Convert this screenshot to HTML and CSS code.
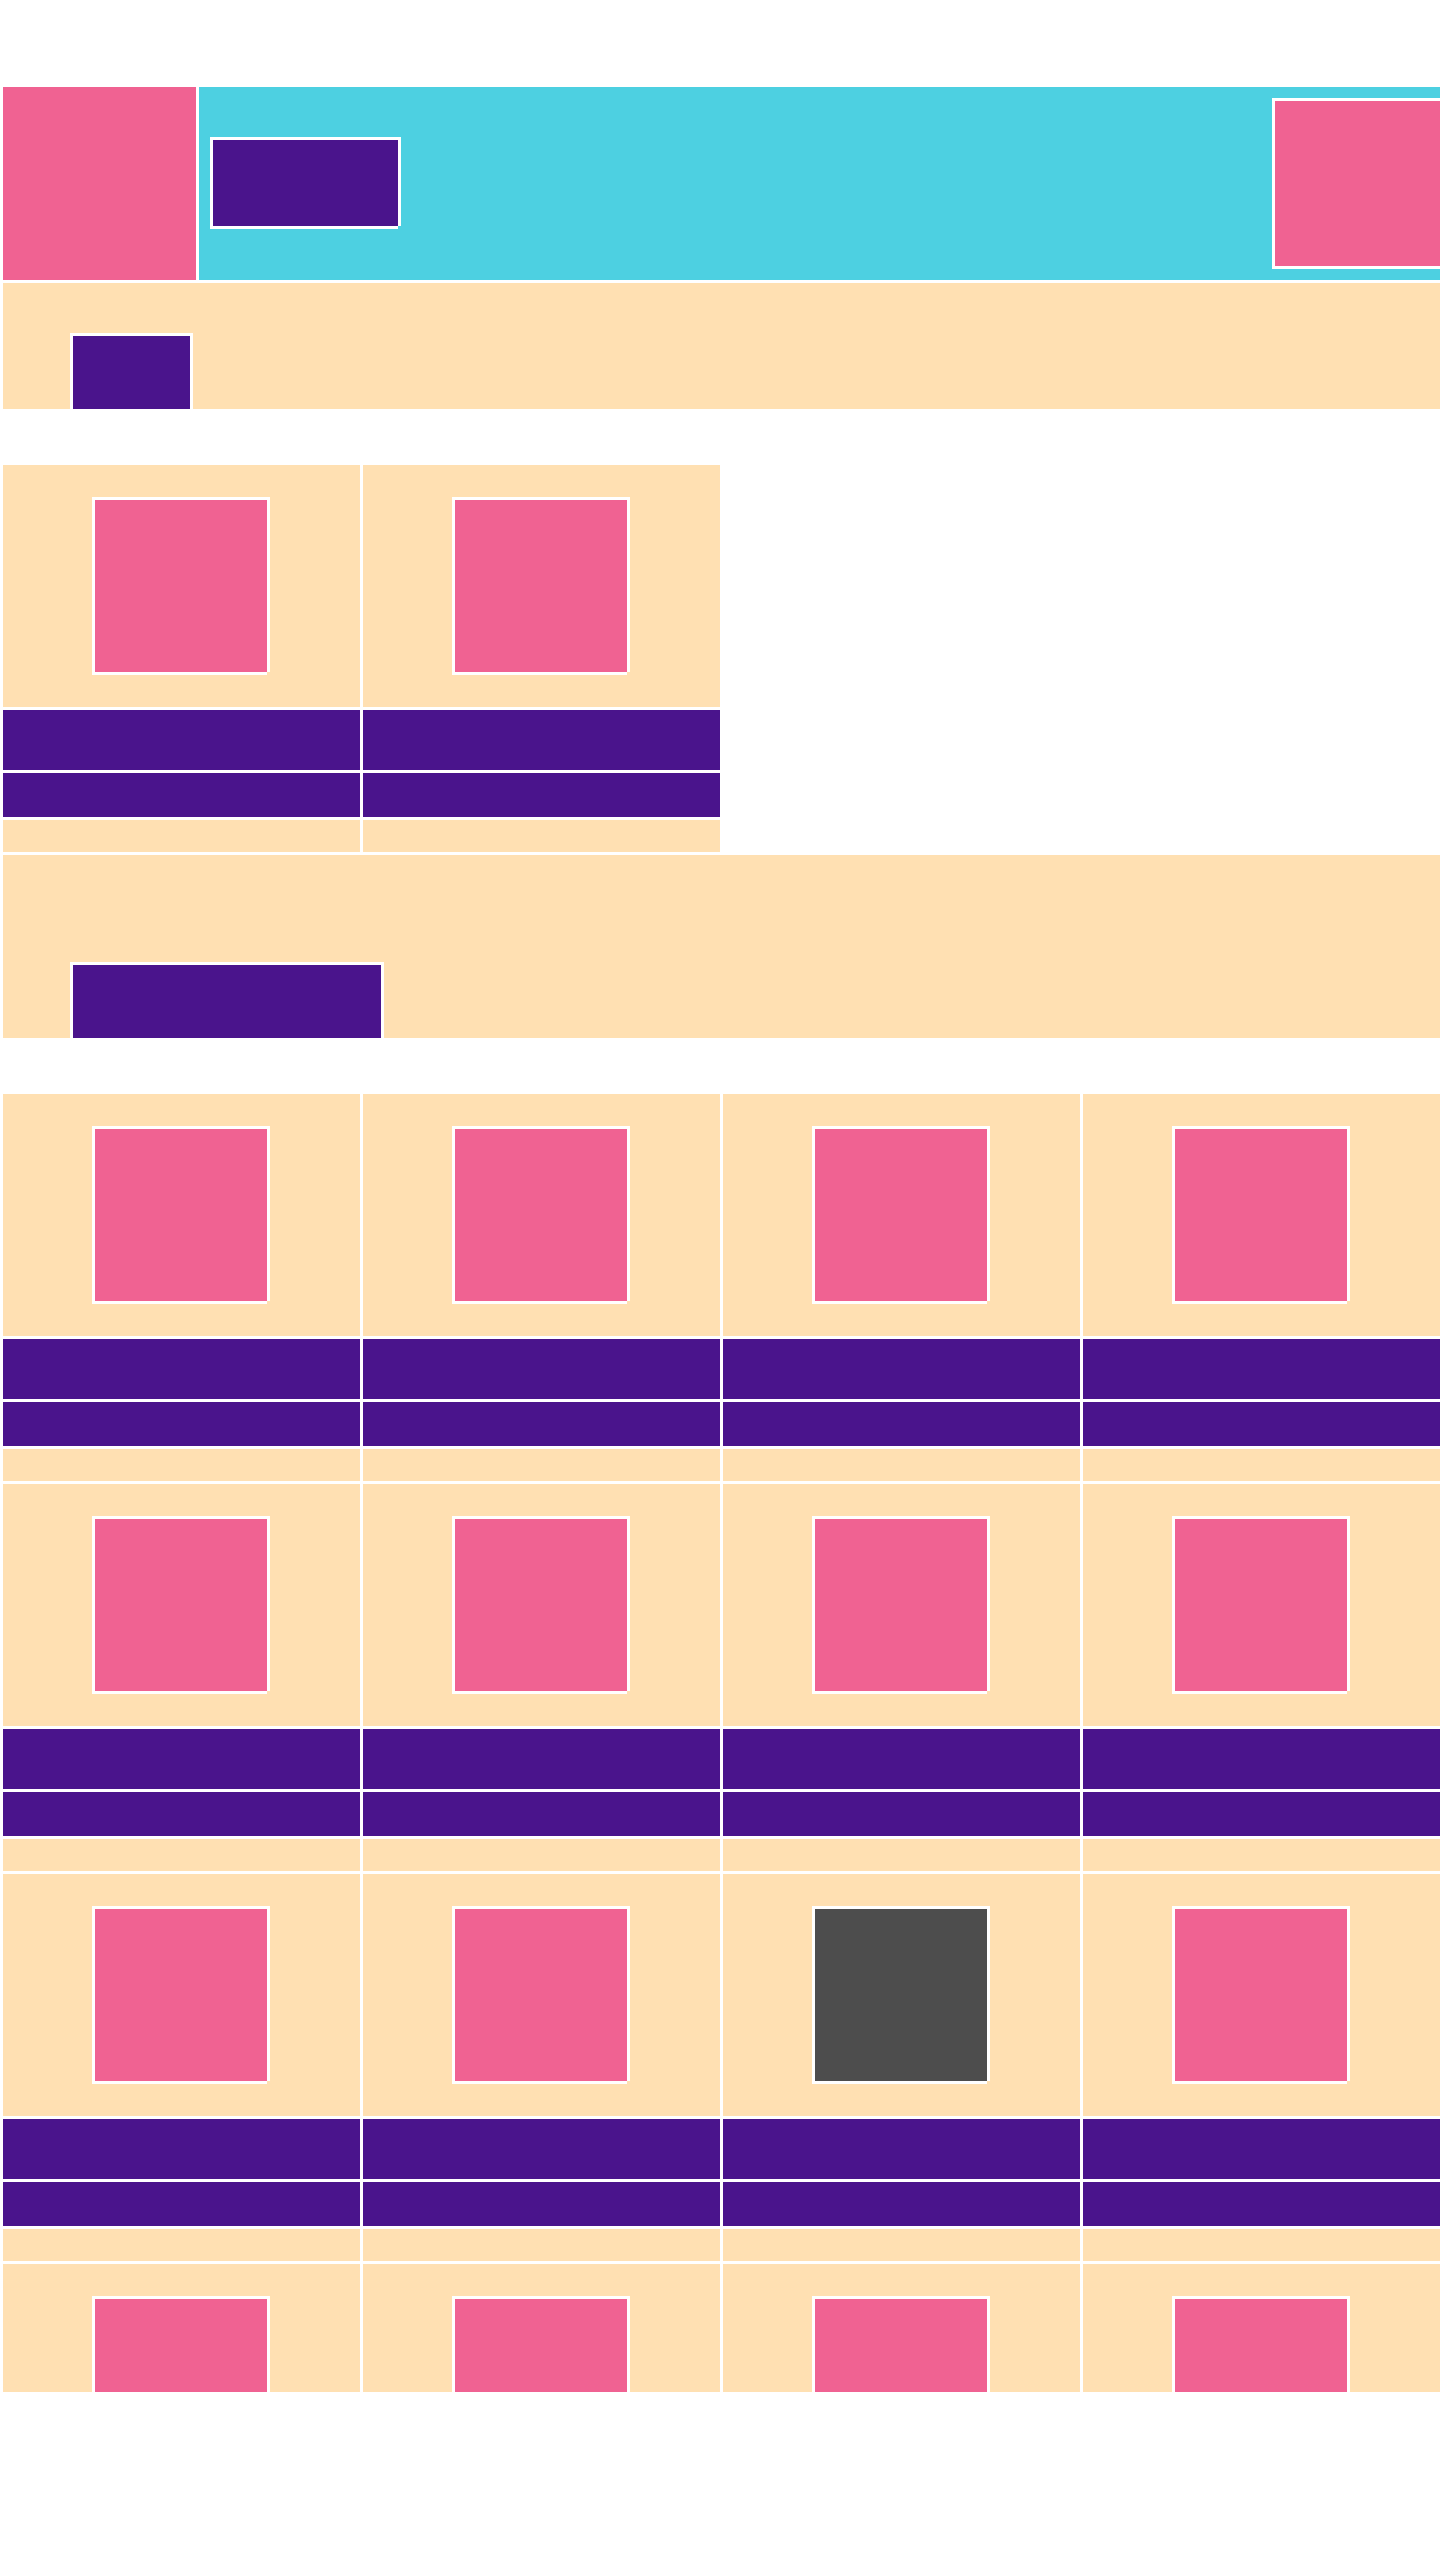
FILE: index.html
```html
<!DOCTYPE html>
<html lang="en">
<head>
<meta charset="utf-8">
<title>Catalog</title>
<link rel="stylesheet" href="styles.css">
</head>
<body>
<div class="page">
  <header class="header">
    <div class="logo"></div>
    <div class="bar">
      <div class="nav-btn box"></div>
      <div class="avatar box"></div>
    </div>
  </header>

  <section class="band band-short">
    <div class="band-btn btn-small box"></div>
  </section>

  <section class="grid">
    <div class="card"><div class="media"><div class="thumb box"></div></div><div class="title"></div><div class="sub"></div><div class="foot"></div></div>
    <div class="card"><div class="media"><div class="thumb box"></div></div><div class="title"></div><div class="sub"></div><div class="foot"></div></div>
  </section>

  <section class="band band-tall">
    <div class="band-btn btn-wide box"></div>
  </section>

  <section class="grid">
    <div class="card"><div class="media"><div class="thumb box"></div></div><div class="title"></div><div class="sub"></div><div class="foot"></div></div>
    <div class="card"><div class="media"><div class="thumb box"></div></div><div class="title"></div><div class="sub"></div><div class="foot"></div></div>
    <div class="card"><div class="media"><div class="thumb box"></div></div><div class="title"></div><div class="sub"></div><div class="foot"></div></div>
    <div class="card"><div class="media"><div class="thumb box"></div></div><div class="title"></div><div class="sub"></div><div class="foot"></div></div>
    <div class="card"><div class="media"><div class="thumb box"></div></div><div class="title"></div><div class="sub"></div><div class="foot"></div></div>
    <div class="card"><div class="media"><div class="thumb box"></div></div><div class="title"></div><div class="sub"></div><div class="foot"></div></div>
    <div class="card"><div class="media"><div class="thumb box"></div></div><div class="title"></div><div class="sub"></div><div class="foot"></div></div>
    <div class="card"><div class="media"><div class="thumb box"></div></div><div class="title"></div><div class="sub"></div><div class="foot"></div></div>
    <div class="card"><div class="media"><div class="thumb box"></div></div><div class="title"></div><div class="sub"></div><div class="foot"></div></div>
    <div class="card"><div class="media"><div class="thumb box"></div></div><div class="title"></div><div class="sub"></div><div class="foot"></div></div>
    <div class="card"><div class="media"><div class="thumb thumb-dark box"></div></div><div class="title"></div><div class="sub"></div><div class="foot"></div></div>
    <div class="card"><div class="media"><div class="thumb box"></div></div><div class="title"></div><div class="sub"></div><div class="foot"></div></div>
    <div class="card"><div class="media"><div class="thumb box"></div></div><div class="title"></div><div class="sub"></div><div class="foot"></div></div>
    <div class="card"><div class="media"><div class="thumb box"></div></div><div class="title"></div><div class="sub"></div><div class="foot"></div></div>
    <div class="card"><div class="media"><div class="thumb box"></div></div><div class="title"></div><div class="sub"></div><div class="foot"></div></div>
    <div class="card"><div class="media"><div class="thumb box"></div></div><div class="title"></div><div class="sub"></div><div class="foot"></div></div>
  </section>
</div>
</body>
</html>
```

FILE: styles.css
```css
html, body {
  margin: 0;
  padding: 0;
  background: #ffffff;
  font-family: "Liberation Sans", Arial, sans-serif;
}

.page {
  box-sizing: border-box;
  width: 1440px;
  height: 2392px;
  padding-top: 84px;
  overflow: hidden;
}

/* leaf boxes: white stroke on top/left, offset strokes right/bottom */
.box {
  border-top: 3px solid #ffffff;
  border-left: 3px solid #ffffff;
  box-shadow: 3px 0 0 #ffffff, 0 3px 0 #ffffff;
  flex: none;
}

/* ---------- header ---------- */
.header {
  display: flex;
  height: 193px;
  border-top: 3px solid #ffffff;
}

.logo {
  width: 193px;
  border-left: 3px solid #ffffff;
  background: #f06292;
  flex: none;
}

.bar {
  flex: 1;
  display: flex;
  align-items: flex-start;
  padding-left: 11px;
  border-left: 3px solid #ffffff;
  background: #4dd0e1;
}

.nav-btn {
  width: 185px;
  height: 86px;
  margin-top: 50px;
  background: #4a148c;
}

.avatar {
  width: 165px;
  height: 165px;
  margin-top: 11px;
  margin-left: auto;
  background: #f06292;
}

/* ---------- bands ---------- */
.band {
  display: flex;
  align-items: flex-end;
  padding-left: 67px;
  border-top: 3px solid #ffffff;
  border-left: 3px solid #ffffff;
  background: #ffe0b2;
}

.band-short {
  height: 126px;
}

.band-tall {
  height: 183px;
}

.band-btn {
  height: 73px;
  background: #4a148c;
}

.btn-small {
  width: 117px;
}

.btn-wide {
  width: 308px;
}

/* ---------- card grids ---------- */
.grid {
  display: grid;
  grid-template-columns: repeat(4, 360px);
  margin-top: 53px;
}

.card {
  display: flex;
  flex-direction: column;
  border-left: 3px solid #ffffff;
}

.media {
  height: 242px;
  padding: 32px 0 0 89px;
  box-sizing: content-box;
  height: 210px;
  border-top: 3px solid #ffffff;
  background: #ffe0b2;
}

.thumb {
  width: 172px;
  height: 172px;
  background: #f06292;
}

.thumb-dark {
  background: #4d4d4d;
}

.title {
  height: 60px;
  border-top: 3px solid #ffffff;
  background: #4a148c;
}

.sub {
  height: 44px;
  border-top: 3px solid #ffffff;
  background: #4a148c;
}

.foot {
  height: 32px;
  border-top: 3px solid #ffffff;
  background: #ffe0b2;
}
```
